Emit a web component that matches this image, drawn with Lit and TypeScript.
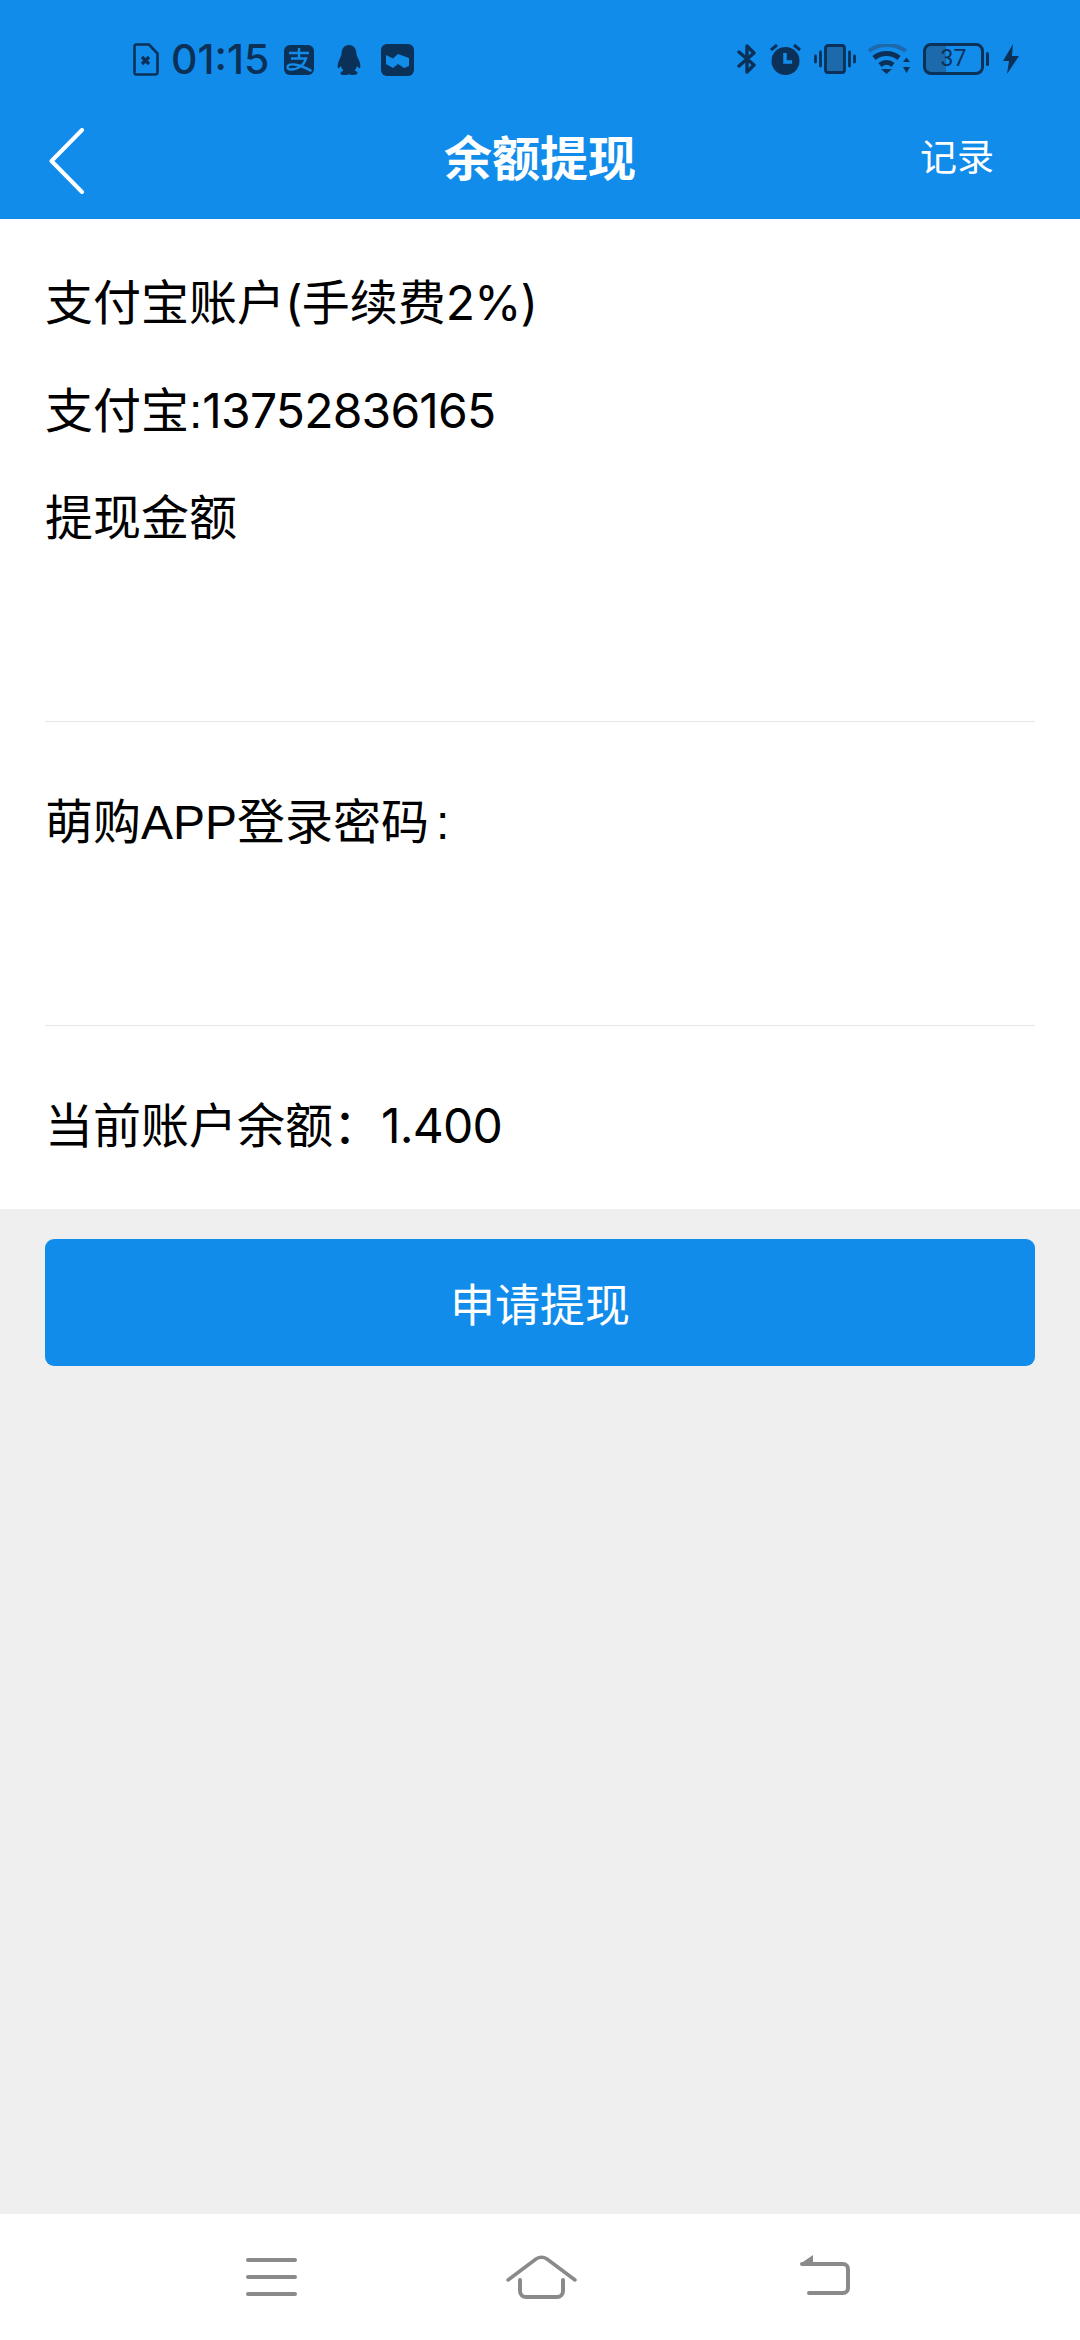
import { LitElement, html, css, svg } from 'lit';
import { customElement } from 'lit/decorators.js';

const DARK = '#0b3158';
const BLUE = '#128ceb';
const MID = '#1c69ab';
const GREY = '#8a8a8a';

const fileIcon = html`<svg width="26" height="33" viewBox="0 0 26 33">
  <path d="M3 1.500h13l8.500 9V29a2.500 2.500 0 0 1-2.500 2.500H3A2 2 0 0 1 1.500 29V3A2 2 0 0 1 3 1.500z" fill="none" stroke="${DARK}" stroke-width="2.600"/>
  <path d="M9 14l7 7M16 14l-7 7" stroke="${DARK}" stroke-width="3.200"/>
</svg>`;

const alipayIcon = html`<svg width="30" height="30" viewBox="0 0 30 30">
  <rect width="30" height="30" rx="6" fill="${DARK}"/>
  <path d="M5 8h20M15 3v10M7 13.500h15c-2 7-8 11-15 11-2 0-3.500-1-3.500-2.500 0-4 10-4 24 4" fill="none" stroke="${BLUE}" stroke-width="2.400"/>
</svg>`;

const qqIcon = html`<svg width="26" height="30" viewBox="0 0 26 30">
  <path d="M13 0c5 0 7.500 4 7.500 9 0 1 .5 2 1.500 4 2 4 3 8 2 10-.5 1-2-.5-3-2-.5 2-1.500 3.500-2.500 4.500 2 .8 3 1.500 3 2.500S20 30 17 30c-2 0-3-.6-4-.6s-2 .6-4 .6c-3 0-4.500-.6-4.500-1.600S5.500 26.300 7.500 25.500C6.500 24.500 5.500 23 5 21c-1 1.500-2.500 3-3 2-1-2 0-6 2-10 1-2 1.500-3 1.500-4C5.500 4 8 0 13 0z" fill="${DARK}"/>
</svg>`;

const mailIcon = html`<svg width="33" height="32" viewBox="0 0 33 32">
  <rect width="33" height="32" rx="6" fill="${DARK}"/>
  <path d="M5 11l7 3.500 5-4.500 11 4v8l-5 2-6-4-5 4-7-4z" fill="${BLUE}"/>
</svg>`;

const bluetoothIcon = html`<svg width="20" height="30" viewBox="0 0 20 30">
  <path d="M2 8l15 13-7 7V2l7 7L2 22" fill="none" stroke="${DARK}" stroke-width="3.400" stroke-linejoin="round" stroke-linecap="round"/>
</svg>`;

const alarmIcon = html`<svg width="33" height="32" viewBox="0 0 33 32">
  <circle cx="16.500" cy="18" r="14" fill="${DARK}"/>
  <path d="M2 7l6-5M31 7l-6-5" stroke="${DARK}" stroke-width="3"/>
  <path d="M16 10v9h7" fill="none" stroke="${BLUE}" stroke-width="3.500"/>
</svg>`;

const vibrateIcon = html`<svg width="42" height="30" viewBox="0 0 42 30">
  <rect x="11.500" y="1.500" width="19" height="27" rx="2.500" fill="${MID}" stroke="${DARK}" stroke-width="2.800"/>
  <path d="M6.500 8v14M35.500 8v14M1.500 12v6M40.500 12v6" stroke="${DARK}" stroke-width="2.800" stroke-linecap="round"/>
</svg>`;

const wifiIcon = html`<svg width="43" height="30" viewBox="0 0 43 30">
  <path d="M1 7C11-1 27-1 38 7" fill="none" stroke="${MID}" stroke-width="4"/>
  <path d="M6 14c7-6 18-6 25 0" fill="none" stroke="${DARK}" stroke-width="5"/>
  <path d="M12 21c4-3.500 9-3.500 13 0" fill="none" stroke="${DARK}" stroke-width="5"/>
  <path d="M13 25h11l-5.500 5z" fill="${DARK}"/>
  <path d="M35 18l3.500-4.500 3.500 4.500zM35 23h7l-3.500 6z" fill="${DARK}"/>
</svg>`;

const boltIcon = html`<svg width="16" height="30" viewBox="0 0 16 30">
  <path d="M10 0L0 17h6l-2 13L16 12H9z" fill="${DARK}"/>
</svg>`;

const backArrow = html`<svg width="36" height="66" viewBox="0 0 36 66">
  <path d="M33 2L2.500 33 33 64" fill="none" stroke="#fff" stroke-width="4" stroke-linecap="round" stroke-linejoin="round"/>
</svg>`;

const menuIcon = html`<svg width="51" height="40" viewBox="0 0 51 40">
  ${[3, 20, 37].map(y => svg`<path d="M2 ${y}h47" stroke="${GREY}" stroke-width="4" stroke-linecap="round"/>`)}
</svg>`;

const homeIcon = html`<svg width="71" height="44" viewBox="0 0 71 44">
  <path d="M2 25L30 4q5.500-3.500 11 0L69 25" fill="none" stroke="${GREY}" stroke-width="3.500" stroke-linecap="round"/>
  <path d="M14 25v11a6 6 0 0 0 6 6h31a6 6 0 0 0 6-6V25" fill="none" stroke="${GREY}" stroke-width="4" stroke-linecap="round"/>
</svg>`;

const returnIcon = html`<svg width="52" height="42" viewBox="0 0 52 42">
  <path d="M1 9L14 0v9z" fill="${GREY}"/>
  <path d="M3 9h41a5 5 0 0 1 5 5v19a5 5 0 0 1-5 5H10" fill="none" stroke="${GREY}" stroke-width="4" stroke-linecap="round"/>
</svg>`;

@customElement('app-root')
export class AppRoot extends LitElement {
  static styles = css`
    :host {
      display: flex;
      flex-direction: column;
      height: 2340px;
      background: #efefef;
      font-family: 'Liberation Sans', 'Noto Sans CJK SC', sans-serif;
      color: #000;
    }

    * {
      box-sizing: border-box;
    }

    svg {
      display: block;
      flex: none;
    }

    .top {
      height: 219px;
      background: #128ceb;
      display: flex;
      flex-direction: column;
    }

    .status {
      height: 92px;
      padding: 43px 61px 0 133px;
      display: flex;
      align-items: flex-start;
      justify-content: space-between;
      color: #0b3158;
    }

    .status-group {
      display: flex;
      align-items: center;
    }

    .time {
      font-family: 'Inter', sans-serif;
      font-size: 41px;
      font-weight: 500;
      line-height: 33px;
      margin: 0 15px 0 12px;
    }

    .qq {
      margin: 0 19px 0 22px;
    }

    .right {
      gap: 12px;
    }

    .battery-wrap {
      display: flex;
      align-items: center;
      margin-right: 2px;
    }

    .battery {
      width: 61px;
      height: 32px;
      border: 3px solid #0b3158;
      border-radius: 8px;
      background: linear-gradient(90deg, #1c69ab 0 37%, transparent 37%);
      font-family: 'Roboto', sans-serif;
      font-size: 23px;
      line-height: 26px;
      text-align: center;
      margin-right: 2px;
    }

    .battery-tip {
      width: 3px;
      height: 14px;
      background: #0b3158;
      border-radius: 2px;
    }

    .bar {
      flex: 1;
      display: flex;
      align-items: center;
      justify-content: space-between;
      padding: 0 86px 0 49px;
      position: relative;
      color: #fff;
    }

    .back {
      margin-top: 11px;
    }

    .title {
      position: absolute;
      left: 0;
      right: 0;
      text-align: center;
      font-size: 48px;
      font-weight: 700;
      margin-bottom: 2px;
    }

    .link {
      font-size: 37px;
      margin-bottom: 2px;
    }

    .form {
      background: #fff;
      height: 990px;
      padding: 30px 45px 0;
    }

    .row {
      height: 108px;
      line-height: 108px;
      font-size: 48px;
      white-space: pre;
    }

    .num {
      font-family: 'Inter', sans-serif;
      letter-spacing: -0.8px;
    }

    .colon {
      margin-left: 7px;
    }

    .field {
      height: 149px;
      border-bottom: 1px solid #e8e8e8;
    }

    .field.first {
      margin-bottom: 47px;
    }

    .row.balance {
      margin-top: 46px;
    }

    .submit {
      margin: 30px 45px 0;
      height: 127px;
      background: #128ceb;
      border-radius: 9px;
      color: #fff;
      font-size: 45px;
      display: flex;
      align-items: center;
      justify-content: center;
    }

    .nav {
      margin-top: auto;
      height: 126px;
      background: #fff;
      display: flex;
      padding: 41px 0 0 246px;
    }

    .menu {
      margin: 2px 209px 0 0;
    }

    .home {
      margin-right: 222px;
    }
  `;

  render() {
    return html`
      <div class="top">
        <div class="status">
          <div class="status-group">
            ${fileIcon}
            <span class="time">01:15</span>
            ${alipayIcon}
            <span class="qq">${qqIcon}</span>
            ${mailIcon}
          </div>
          <div class="status-group right">
            ${bluetoothIcon} ${alarmIcon} ${vibrateIcon} ${wifiIcon}
            <div class="battery-wrap">
              <div class="battery">37</div>
              <div class="battery-tip"></div>
            </div>
            ${boltIcon}
          </div>
        </div>
        <div class="bar">
          <span class="back">${backArrow}</span>
          <span class="title">余额提现</span>
          <span class="link">记录</span>
        </div>
      </div>
      <div class="form">
        <div class="row">支付宝账户<span class="num">(</span>手续费<span class="num">2%)</span></div>
        <div class="row">支付宝:<span class="num">13752836165</span></div>
        <div class="row">提现金额</div>
        <div class="field first"></div>
        <div class="row">萌购APP登录密码<span class="colon">:</span></div>
        <div class="field"></div>
        <div class="row balance">当前账户余额：<span class="num">1.400</span></div>
      </div>
      <div class="submit">申请提现</div>
      <div class="nav">
        <span class="menu">${menuIcon}</span>
        <span class="home">${homeIcon}</span>
        ${returnIcon}
      </div>
    `;
  }
}
